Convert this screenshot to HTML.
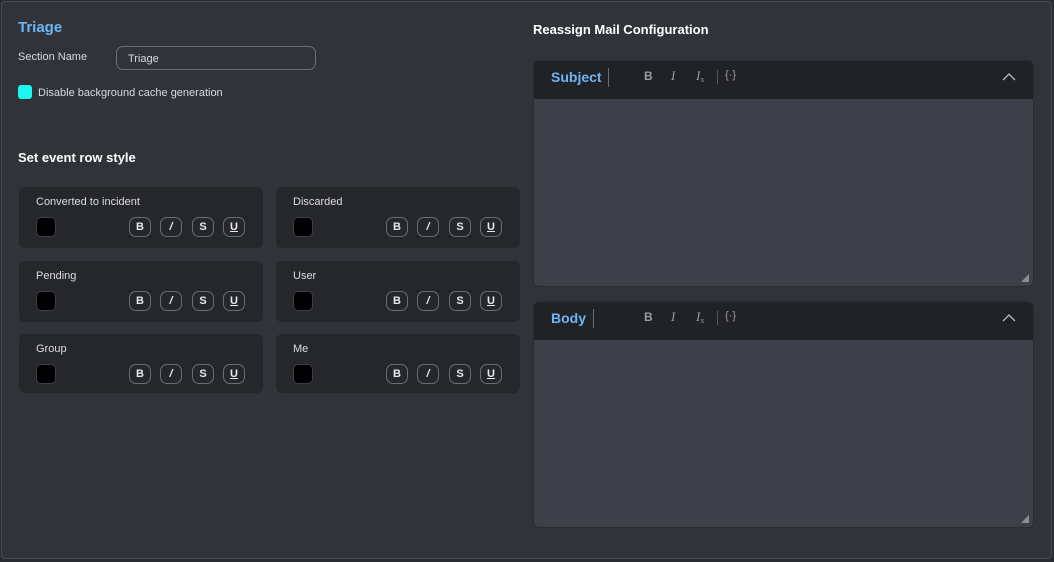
<!DOCTYPE html><html><head><style>
*{box-sizing:border-box;margin:0;padding:0}
body{width:1054px;height:562px;background:#2a2c31;font-family:"Liberation Sans",sans-serif;overflow:hidden;position:relative}
.frame{position:absolute;left:1px;top:1px;width:1051px;height:558px;background:#30333a;border:1px solid #474a51;border-radius:4px}
.a{position:absolute}
.t{color:#d8dadd;font-size:11px}
.card{position:absolute;width:244px;height:61px;background:#25272b;border-radius:6px}
.card .l{position:absolute;left:17px;top:9px;color:#dcdde0;font-size:11px}
.sw{position:absolute;left:17px;top:30px;width:20px;height:20px;background:#000;border-radius:5px;border:1px solid #3c3f45}
.bt{position:absolute;top:30px;width:22px;height:20px;border:1px solid #6a6e76;border-radius:7px;color:#e8e9eb;font-size:11px;font-weight:bold;text-align:center;line-height:18px}
.ed{position:absolute;left:533px;width:501px;background:#3d4048;border-radius:6px;border:1px solid #2a2c30;overflow:hidden}
.tb{height:38px;background:#212225;position:relative}
.tb span{position:absolute;color:#9a9ca1;font-size:12px}
</style></head><body><div class="frame"></div>
<div class="a" style="left:18px;top:19px;color:#6cb6f5;font-size:15px;font-weight:bold">Triage</div>
<div class="a t" style="left:18px;top:51px">Section Name</div>
<div class="a" style="left:116px;top:46px;width:200px;height:24px;border:1px solid #6a6e76;border-radius:7px;color:#d8dadd;font-size:11px;padding:6px 11px">Triage</div>
<div class="a" style="left:18px;top:85px;width:14px;height:14px;background:#1ef5f0;border-radius:3px"></div>
<div class="a t" style="left:38px;top:87px">Disable background cache generation</div>
<div class="a" style="left:18px;top:150px;color:#fff;font-size:13px;font-weight:bold">Set event row style</div>
<div class="card" style="left:19px;top:187px"><div class="l">Converted to incident</div><div class="sw"></div><div class="bt" style="left:110px">B</div><div class="bt" style="left:141px;font-style:italic">/</div><div class="bt" style="left:173px">S</div><div class="bt" style="left:204px;text-decoration:underline">U</div></div>
<div class="card" style="left:276px;top:187px"><div class="l">Discarded</div><div class="sw"></div><div class="bt" style="left:110px">B</div><div class="bt" style="left:141px;font-style:italic">/</div><div class="bt" style="left:173px">S</div><div class="bt" style="left:204px;text-decoration:underline">U</div></div>
<div class="card" style="left:19px;top:261px"><div class="l">Pending</div><div class="sw"></div><div class="bt" style="left:110px">B</div><div class="bt" style="left:141px;font-style:italic">/</div><div class="bt" style="left:173px">S</div><div class="bt" style="left:204px;text-decoration:underline">U</div></div>
<div class="card" style="left:276px;top:261px"><div class="l">User</div><div class="sw"></div><div class="bt" style="left:110px">B</div><div class="bt" style="left:141px;font-style:italic">/</div><div class="bt" style="left:173px">S</div><div class="bt" style="left:204px;text-decoration:underline">U</div></div>
<div class="card" style="left:19px;top:334px;height:59px"><div class="l">Group</div><div class="sw"></div><div class="bt" style="left:110px">B</div><div class="bt" style="left:141px;font-style:italic">/</div><div class="bt" style="left:173px">S</div><div class="bt" style="left:204px;text-decoration:underline">U</div></div>
<div class="card" style="left:276px;top:334px;height:59px"><div class="l">Me</div><div class="sw"></div><div class="bt" style="left:110px">B</div><div class="bt" style="left:141px;font-style:italic">/</div><div class="bt" style="left:173px">S</div><div class="bt" style="left:204px;text-decoration:underline">U</div></div>
<div class="a" style="left:533px;top:22px;color:#fff;font-size:13px;font-weight:bold">Reassign Mail Configuration</div>
<div class="ed" style="top:60px;height:227px"><div class="tb">
<span style="left:17px;top:8px;color:#6cb6f5;font-size:14px;font-weight:bold">Subject</span>
<div class="a" style="left:74px;top:7px;width:1px;height:19px;background:#6a6e76"></div>
<span style="left:110px;top:8px;font-weight:bold">B</span><span style="left:137px;top:7px;font-style:italic;font-family:'Liberation Serif',serif;font-size:13px">I</span><span style="left:162px;top:7px;font-style:italic;font-family:'Liberation Serif',serif;font-size:13px;line-height:15px">I<sub style="font-size:8px;vertical-align:-2px;font-style:normal">x</sub></span>
<div class="a" style="left:183px;top:9px;width:1px;height:14px;background:#55585e"></div>
<span style="left:191px;top:8px;font-size:11px">{·}</span>
<svg class="a" style="left:468px;top:11px" width="14" height="9"><path d="M1 8 L7 2 L13 8" stroke="#b8babe" stroke-width="1.3" fill="none"/></svg>
</div><svg class="a" style="right:4px;bottom:4px" width="8" height="8"><path d="M8 0 V8 H0Z" fill="#8a8d93"/></svg></div>
<div class="ed" style="top:301px;height:227px"><div class="tb">
<span style="left:17px;top:8px;color:#6cb6f5;font-size:14px;font-weight:bold">Body</span>
<div class="a" style="left:59px;top:7px;width:1px;height:19px;background:#6a6e76"></div>
<span style="left:110px;top:8px;font-weight:bold">B</span><span style="left:137px;top:7px;font-style:italic;font-family:'Liberation Serif',serif;font-size:13px">I</span><span style="left:162px;top:7px;font-style:italic;font-family:'Liberation Serif',serif;font-size:13px;line-height:15px">I<sub style="font-size:8px;vertical-align:-2px;font-style:normal">x</sub></span>
<div class="a" style="left:183px;top:9px;width:1px;height:14px;background:#55585e"></div>
<span style="left:191px;top:8px;font-size:11px">{·}</span>
<svg class="a" style="left:468px;top:11px" width="14" height="9"><path d="M1 8 L7 2 L13 8" stroke="#b8babe" stroke-width="1.3" fill="none"/></svg>
</div><svg class="a" style="right:4px;bottom:4px" width="8" height="8"><path d="M8 0 V8 H0Z" fill="#8a8d93"/></svg></div>
</body></html>
